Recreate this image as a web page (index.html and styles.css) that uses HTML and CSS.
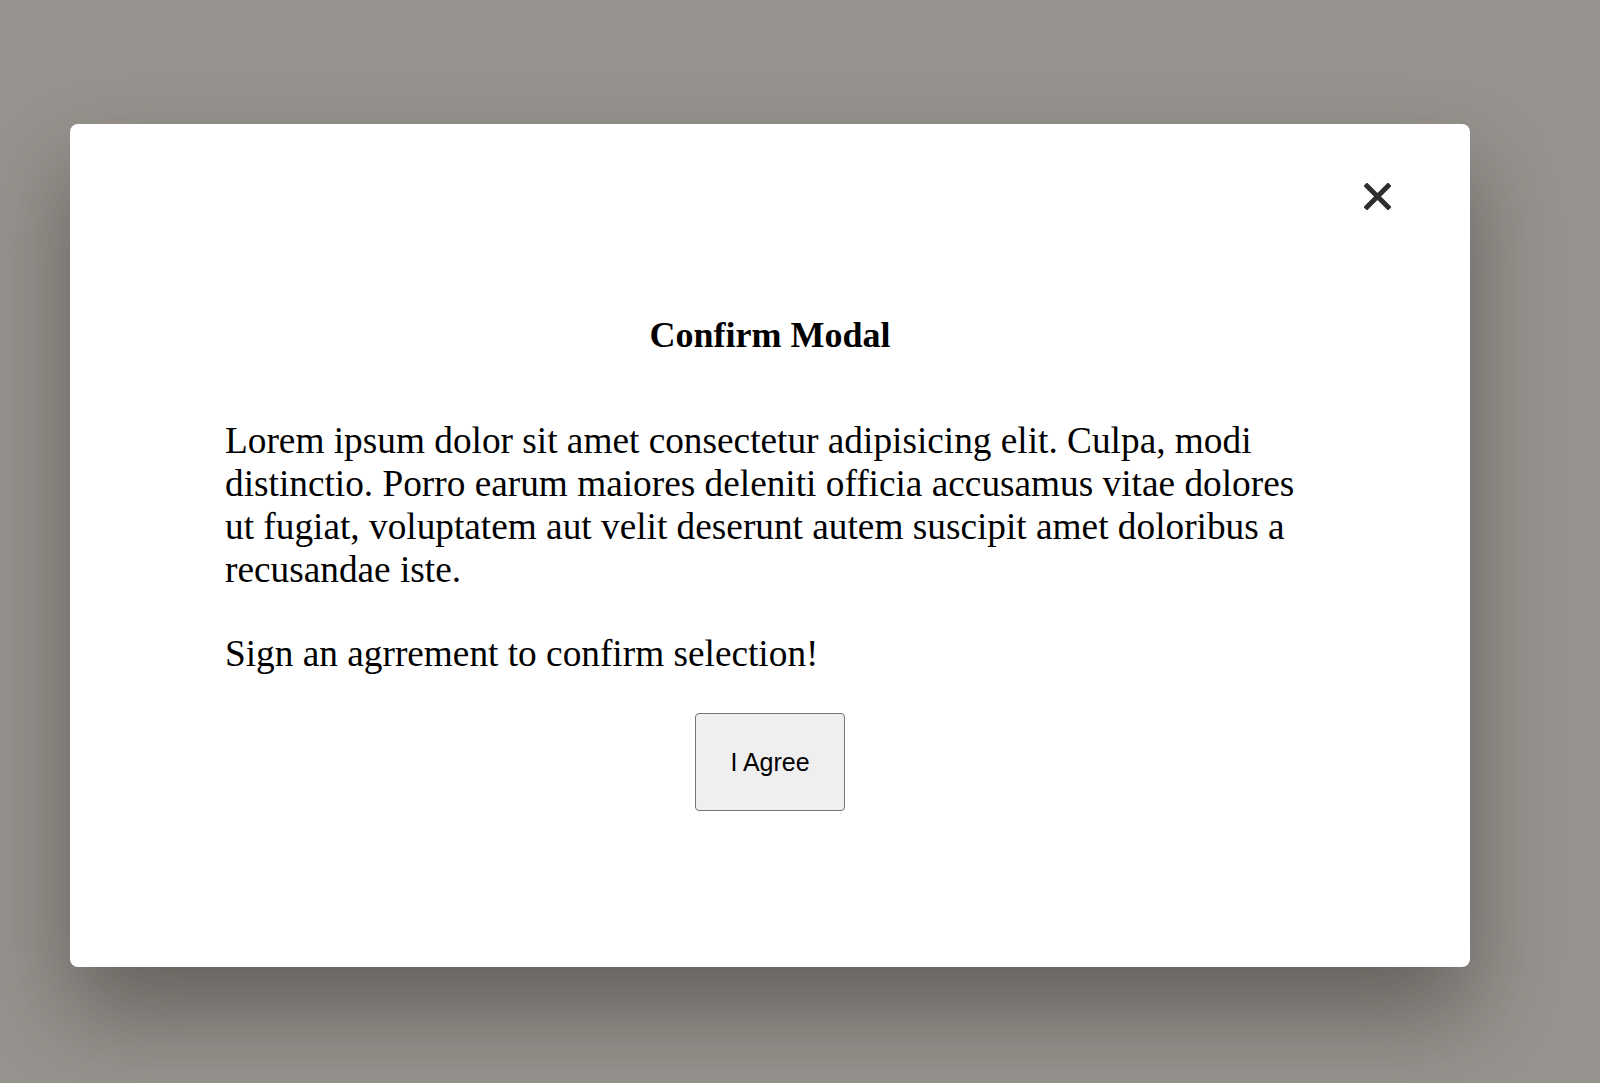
FILE: index.html
```html
<!DOCTYPE html>
<html lang="en">
<head>
<meta charset="utf-8">
<title>Confirm Modal</title>
<link rel="stylesheet" href="styles.css">
</head>
<body>
  <div class="overlay">
    <div class="modal" role="dialog" aria-labelledby="modal-title">
      <div class="modal-header">
        <button class="close" aria-label="Close">
          <svg width="27" height="27" viewBox="0 0 27 27" aria-hidden="true">
            <path d="M3 3 L24 24 M24 3 L3 24" stroke="#2e2e2e" stroke-width="5" stroke-linecap="square" fill="none"/>
          </svg>
        </button>
      </div>
      <div class="modal-body">
        <h2 id="modal-title" class="title">Confirm Modal</h2>
        <p class="text text-first">Lorem ipsum dolor sit amet consectetur adipisicing elit. Culpa, modi distinctio. Porro earum maiores deleniti officia accusamus vitae dolores ut fugiat, voluptatem aut velit deserunt autem suscipit amet doloribus a recusandae iste.</p>
        <p class="text text-second">Sign an agrrement to confirm selection!</p>
        <div class="actions">
          <button class="agree">I Agree</button>
        </div>
      </div>
    </div>
  </div>
</body>
</html>
```

FILE: styles.css
```css
html, body {
  margin: 0;
  padding: 0;
  height: 100%;
}

body {
  background: #97938e;
  font-family: "Liberation Serif", "Times New Roman", serif;
  overflow: hidden;
}

.overlay {
  padding: 124px 0 0 70px;
}

.modal {
  box-sizing: border-box;
  width: 1400px;
  height: 843px;
  background: #ffffff;
  border-radius: 8px;
  box-shadow: 0 45px 90px rgba(40, 36, 32, 0.45);
  display: flex;
  flex-direction: column;
}

.modal-header {
  display: flex;
  justify-content: flex-end;
  padding: 59px 79px 0 0;
}

.close {
  display: block;
  width: 27px;
  height: 27px;
  padding: 0;
  margin: 0;
  border: 0;
  background: transparent;
  line-height: 0;
}

.modal-body {
  padding: 0 155px;
  display: flex;
  flex-direction: column;
}

.title {
  margin: 105px 0 0 0;
  font-size: 36px;
  font-weight: bold;
  line-height: 41.4px;
  text-align: center;
  color: #000;
}

.text {
  margin: 0;
  font-size: 37.3px;
  line-height: 43px;
  color: #000;
}

.text-first {
  margin-top: 63px;
}

.text-second {
  margin-top: 41px;
}

.actions {
  display: flex;
  justify-content: center;
  margin-top: 38px;
}

.agree {
  box-sizing: border-box;
  width: 150px;
  height: 98px;
  padding: 0;
  font-family: "Liberation Sans", Arial, sans-serif;
  font-size: 25px;
  color: #000;
  background: #efefef;
  border: 1px solid #767676;
  border-radius: 4px;
}
```
